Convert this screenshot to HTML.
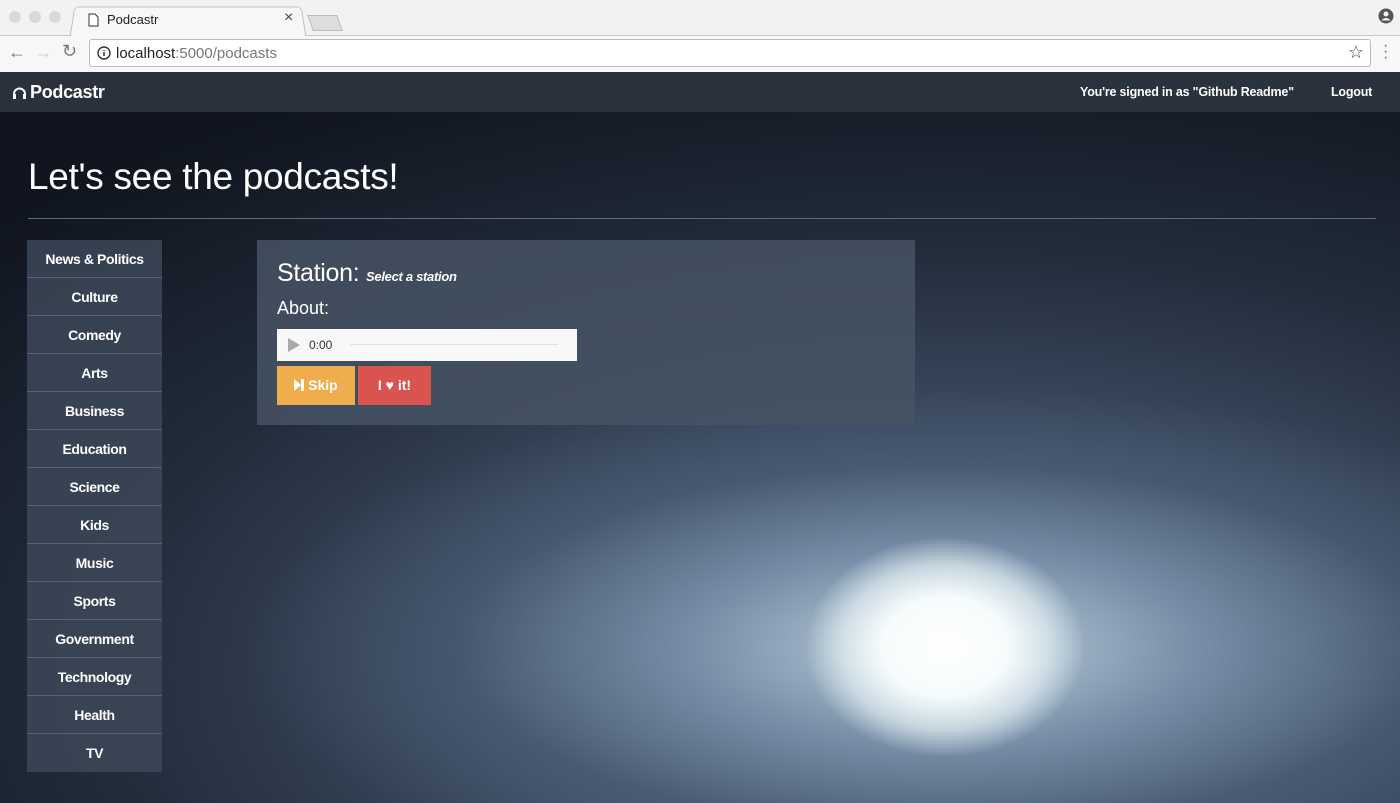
<!DOCTYPE html>
<html><head><meta charset="utf-8"><style>
*{margin:0;padding:0;box-sizing:border-box}
body{width:1400px;height:803px;overflow:hidden;font-family:"Liberation Sans",sans-serif;background:#fff;position:relative}
.tabbar{position:absolute;left:0;top:0;width:1400px;height:36px;background:#f2f2f2;border-bottom:1px solid #c8c8c8}
.dot{position:absolute;top:11px;width:12px;height:12px;border-radius:50%;background:#d9d9d9}
.tab{position:absolute;left:72px;top:6px;width:232px;height:31px;background:#f7f7f7;border:1px solid #bfbfbf;border-bottom:none;border-radius:5px 5px 0 0;transform:perspective(100px) rotateX(8deg)}
.tabtxt{position:absolute;left:107px;top:12px;font-size:13px;color:#222}
.addr{position:absolute;left:0;top:36px;width:1400px;height:36px;background:#f7f7f7}
.omni{position:absolute;left:89px;top:3px;width:1282px;height:28px;background:#fff;border:1px solid #bbb;border-radius:3px}
.url{position:absolute;left:26px;top:5px;font-size:15px;color:#222}
.url span{color:#777}
.page{position:absolute;left:0;top:72px;width:1400px;height:731px;overflow:hidden;
background:
radial-gradient(ellipse 140px 110px at 945px 575px,#fff 0%,#f6fbfb 45%,rgba(225,238,242,.7) 75%,rgba(200,220,230,0) 100%),
radial-gradient(ellipse 700px 260px at 945px 575px,rgba(200,218,230,.9) 0%,rgba(140,165,190,.7) 35%,rgba(80,100,125,.45) 70%,rgba(40,50,70,0) 100%),
radial-gradient(ellipse 1300px 650px at 945px 600px,#5f7288 0%,#3e4e64 35%,#222c3b 65%,#10151f 100%);}
.nav{position:absolute;left:0;top:0;width:1400px;height:40px;background:rgba(45,52,64,.92)}
.brand{position:absolute;left:12px;top:10px;font-size:18px;color:#fff;font-weight:bold;letter-spacing:-0.3px}
.navr{position:absolute;top:13px;font-size:12.5px;color:#fff;font-weight:bold;letter-spacing:-0.2px}
h1{position:absolute;left:28px;top:84px;font-size:37px;font-weight:normal;color:#fff;letter-spacing:-0.3px}
.hr{position:absolute;left:28px;top:146px;width:1348px;height:1px;background:#5b6a7d}
.side{position:absolute;left:27px;top:168px;width:135px;background:rgba(60,72,88,.85)}
.side div{height:38px;line-height:38px;text-align:center;color:#fff;font-size:14px;font-weight:bold;letter-spacing:-0.4px;border-bottom:1px solid #556273}
.side div:last-child{border-bottom:none}
.panel{position:absolute;left:257px;top:168px;width:658px;height:185px;background:rgba(70,83,100,.85)}
.st{position:absolute;left:20px;top:19px;color:#fff;font-size:25px;letter-spacing:-0.3px}
.st i{font-size:13px;font-weight:bold;letter-spacing:-0.3px}
.ab{position:absolute;left:20px;top:58px;color:#fff;font-size:18px}
.audio{position:absolute;left:20px;top:89px;width:300px;height:32px;background:#f8f8f8}
.btn{position:absolute;top:126px;height:39px;line-height:39px;color:#fff;font-weight:bold;font-size:14px;text-align:center}
</style></head><body>
<div class="tabbar">
<div class="dot" style="left:9px"></div><div class="dot" style="left:29px"></div><div class="dot" style="left:49px"></div>
<div class="tab"></div>
<svg style="position:absolute;left:88px;top:13px" width="11" height="14"><path d="M1 1h6l3 3v9H1z" fill="#fff" stroke="#333"/></svg>
<div class="tabtxt">Podcastr</div>
<div style="position:absolute;left:284px;top:9px;font-size:16px;color:#444">×</div>
<div style="position:absolute;left:310px;top:15px;width:30px;height:16px;background:#ddd;border:1px solid #bbb;transform:skewX(20deg)"></div>
<svg style="position:absolute;left:1378px;top:8px" width="16" height="16"><circle cx="8" cy="8" r="7.5" fill="#555"/><circle cx="8" cy="6" r="2.5" fill="#f2f2f2"/><path d="M3.5 12.5q4.5-5 9 0" fill="#f2f2f2"/></svg>
</div>
<div class="addr">
<div style="position:absolute;left:8px;top:6px;font-size:18px;color:#777">←</div>
<div style="position:absolute;left:34px;top:6px;font-size:18px;color:#ccc">→</div>
<div style="position:absolute;left:62px;top:5px;font-size:18px;color:#777">↻</div>
<div class="omni"><svg style="position:absolute;left:7px;top:6px" width="14" height="14"><circle cx="7" cy="7" r="6" fill="none" stroke="#333" stroke-width="1.4"/><path d="M7 6v4M7 4v1" stroke="#333" stroke-width="1.5"/></svg><div class="url">localhost<span>:5000/podcasts</span></div>
<div style="position:absolute;right:6px;top:2px;font-size:18px;color:#444">☆</div></div>
<div style="position:absolute;left:1383px;top:7px;font-size:16px;color:#666;line-height:6px">·<br>·<br>·</div>
</div>
<div class="page">
<div class="nav">
<div class="brand"><svg width="15" height="13" style="vertical-align:-1px;margin-right:3px"><path d="M2 12V8a5.5 5.5 0 0 1 11 0v4" fill="none" stroke="#fff" stroke-width="2"/><rect x="1" y="8" width="3" height="5" fill="#fff"/><rect x="11" y="8" width="3" height="5" fill="#fff"/></svg>Podcastr</div>
<div class="navr" style="left:1080px">You're signed in as "Github Readme"</div>
<div class="navr" style="left:1331px">Logout</div>
</div>
<h1>Let's see the podcasts!</h1>
<div class="hr"></div>
<div class="side"><div>News &amp; Politics</div><div>Culture</div><div>Comedy</div><div>Arts</div><div>Business</div><div>Education</div><div>Science</div><div>Kids</div><div>Music</div><div>Sports</div><div>Government</div><div>Technology</div><div>Health</div><div>TV</div></div>
<div class="panel">
<div class="st">Station: <i>Select a station</i></div>
<div class="ab">About:</div>
<div class="audio"><svg style="position:absolute;left:11px;top:9px" width="12" height="14"><path d="M0 0L12 7L0 14z" fill="#aaa"/></svg><div style="position:absolute;left:32px;top:9px;font-size:12px;color:#333">0:00</div><div style="position:absolute;left:73px;top:15px;width:208px;height:1px;background:#e2e2e2"></div></div>
<div class="btn" style="left:20px;width:78px;background:#f0ad4e"><svg width="10" height="12" style="vertical-align:-1px"><path d="M0 0L7 6L0 12z M7 0h3v12h-3z" fill="#fff"/></svg> Skip</div>
<div class="btn" style="left:101px;width:73px;background:#d9534f">I ♥ it!</div>
</div>
</div>
</body></html>
